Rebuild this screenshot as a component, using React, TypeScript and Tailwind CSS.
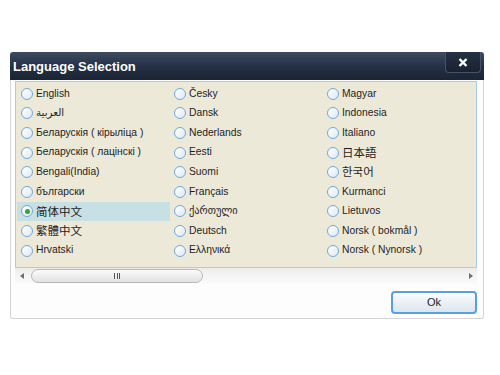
import React from "react";

const col1 = ["English", "العربية", "Беларускія ( кірыліца )", "Беларускія ( лацінскі )", "Bengali(India)", "български", "简体中文", "繁體中文", "Hrvatski"];
const col2 = ["Česky", "Dansk", "Nederlands", "Eesti", "Suomi", "Français", "ქართული", "Deutsch", "Ελληνικά"];
const col3 = ["Magyar", "Indonesia", "Italiano", "日本語", "한국어", "Kurmanci", "Lietuvos", "Norsk ( bokmål )", "Norsk ( Nynorsk )"];

const isCJK = (s: string) => /[\u3000-\u9fff\uac00-\ud7af]/.test(s);

function Radio({ checked }: { checked?: boolean }) {
  return (
    <span className="w-[12px] h-[12px] shrink-0 rounded-full border border-[#6fa9da] bg-linear-to-br from-white to-[#dfe9f2] flex items-center justify-center">
      {checked && <span className="w-[5px] h-[5px] rounded-full bg-[#3aa13a]" />}
    </span>
  );
}

function Item({ label, checked }: { label: string; checked?: boolean }) {
  return (
    <div className={`h-[19.6px] flex items-center gap-[3px] pl-[4px] ${checked ? "bg-[#c6e0e4]" : ""}`}>
      <Radio checked={checked} />
      <span
        className={`whitespace-nowrap text-[#1e1e1e] leading-none ${isCJK(label) ? "text-[11.5px]" : "text-[10.3px]"}`}
        style={isCJK(label) ? { fontFamily: '"Noto Sans CJK SC", "Noto Sans CJK KR", "Noto Sans CJK JP", sans-serif' } : undefined}
      >
        {label}
      </span>
    </div>
  );
}

export default function App() {
  return (
    <div className="w-[500px] h-[375px] bg-white overflow-hidden" style={{ fontFamily: '"Liberation Sans", "DejaVu Sans", sans-serif' }}>
      <div className="ml-[10px] pt-[52px] w-[474px]">
        <div className="h-[28px] rounded-t-[3px] bg-linear-to-b from-[#3e4c62] via-[#243146] to-[#1b2433] flex items-start justify-between">
          <span className="text-white font-bold text-[13px] pl-[3px] pt-[8px] leading-none">Language Selection</span>
          <div className="mr-[3px] w-[36px] h-[21px] border border-t-0 border-[#465366] rounded-b-[4px] bg-linear-to-b from-[#253144] to-[#1a2231] flex items-center justify-center">
            <svg width="10" height="9" viewBox="0 0 10 9">
              <path d="M1.5 1 L8.5 8 M8.5 1 L1.5 8" stroke="white" strokeWidth="2.4" strokeLinecap="butt" />
            </svg>
          </div>
        </div>
        <div className="h-[239px] border-x border-b border-[#d4d4d4] rounded-b-[3px] bg-[#fdfdfd] pl-[4px] pt-[1px]">
          <div className="w-[462px] h-[187px] border border-[#a9cde8] bg-[#ece9d8] pt-[2px] pl-[1px] flex overflow-hidden">
            <div className="w-[153px] shrink-0">
              {col1.map((l) => (
                <Item key={l} label={l} checked={l === "简体中文"} />
              ))}
            </div>
            <div className="w-[153px] shrink-0">
              {col2.map((l) => (
                <Item key={l} label={l} />
              ))}
            </div>
            <div className="w-[153px] shrink-0">
              {col3.map((l) => (
                <Item key={l} label={l} />
              ))}
            </div>
          </div>
          <div className="w-[462px] h-[16px] bg-linear-to-b from-[#ececec] via-[#f5f5f5] to-[#fafafa] flex items-center">
            <svg width="16" height="16" viewBox="0 0 16 16" className="shrink-0">
              <path d="M5 8 L9 5 L9 11 Z" fill="#6e6e6e" />
            </svg>
            <div className="w-[172px] h-[14px] rounded-full border border-[#b9b9b9] bg-linear-to-b from-[#fbfbfb] to-[#e2e2e2] flex items-center justify-center gap-[1.5px]">
              <span className="w-[1px] h-[6px] bg-[#555]" />
              <span className="w-[1px] h-[6px] bg-[#555]" />
              <span className="w-[1px] h-[6px] bg-[#555]" />
            </div>
            <div className="flex-1" />
            <svg width="14" height="16" viewBox="0 0 14 16" className="shrink-0">
              <path d="M6 5 L10 8 L6 11 Z" fill="#6e6e6e" />
            </svg>
          </div>
          <div className="w-[462px] flex justify-end mt-[7px]">
            <button className="w-[86px] h-[23px] rounded-[4px] border-2 border-[#5a9fe2] bg-linear-to-b from-[#fbfcfd] to-[#dbe6ee] text-[11px] text-[#1e1e1e] flex items-center justify-center">
              Ok
            </button>
          </div>
        </div>
      </div>
    </div>
  );
}
